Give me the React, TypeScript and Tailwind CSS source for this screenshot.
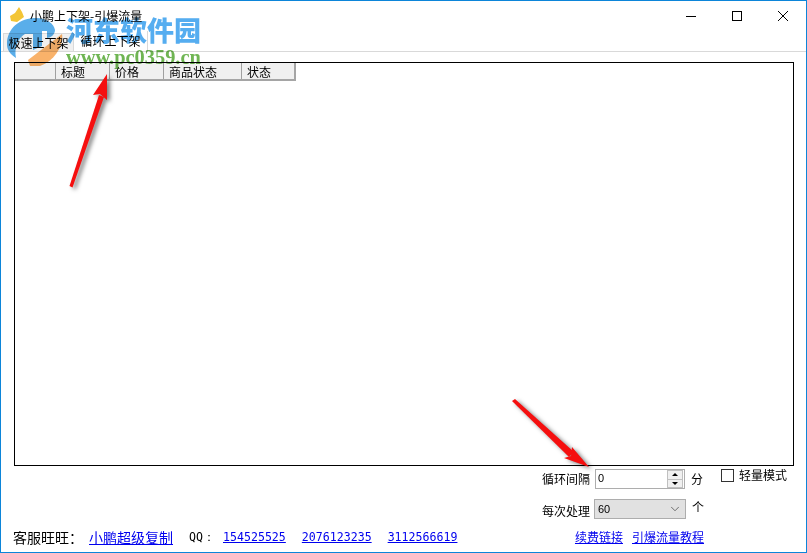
import { ChevronDown } from 'lucide-react';

const cjk = { fontFamily: '"Noto Sans CJK SC", "Liberation Sans", sans-serif' };
const mono = { fontFamily: '"DejaVu Sans Mono", "Liberation Mono", monospace' };

const columns = [
  { name: '', width: 'w-[41px]' },
  { name: '标题', width: 'w-[54px]' },
  { name: '价格', width: 'w-[54px]' },
  { name: '商品状态', width: 'w-[78px]' },
  { name: '状态', width: 'w-[52px]' },
];

function Overlay() {
  return (
    <div className="absolute -left-px -top-px w-[807px] h-[553px] pointer-events-none">
      {/* watermark */}
      <svg className="absolute left-0 top-0 mix-blend-multiply" width="807" height="553">
        <path d="M10 16 L15 13 L19 7 L22 12 L24 17 L17 22 L11 21 Z" fill="#f3c536" />
        <path d="M7 44 C7 28 20 18 36 18 C47 18 54 24 55 30 C55 35 50 38 47 38 L47 31 L42 31 L42 46 L33 50 L33 34 L25 34 C18 38 14 48 16 58 C10 54 7 50 7 44 Z" fill="#5aaeea" />
        <path d="M28 60 L62 34 C64 44 56 60 40 66 L30 66 Z" fill="#f9b26a" />
      </svg>
      <div className="absolute left-[66px] top-[11px] text-[27px] leading-[38px] font-black text-[#55adf0] mix-blend-multiply whitespace-nowrap" style={cjk}>
        河东软件园
      </div>
      <div className="absolute left-[66px] top-[46px] text-[20.4px] leading-[22px] font-bold text-[#6fb553] mix-blend-multiply whitespace-nowrap" style={{ fontFamily: '"Liberation Serif", serif' }}>
        www.pc0359.cn
      </div>
      {/* red arrows */}
      <svg className="absolute left-0 top-0 drop-shadow-[3px_2px_2px_rgba(0,0,0,0.5)]" width="807" height="553">
        <polygon points="69.5,186 72.5,187.5 104,97 99,95" fill="#f50f0f" />
        <polygon points="107,74 93,95 100,94 107,100" fill="#f50f0f" />
        <polygon points="512,401 515,399 574,452 569,457" fill="#f50f0f" />
        <polygon points="589,467 564,458 571,456 572,447" fill="#f50f0f" />
      </svg>
    </div>
  );
}

export default function App() {
  return (
    <div className="relative w-[807px] h-[553px] bg-white border border-[#0c85d9] overflow-hidden flex flex-col text-black text-xs" style={cjk}>
      {/* TITLE BAR */}
      <div className="h-[30px] shrink-0 flex items-center justify-between">
        <span className="ml-[29px] text-xs leading-4">小鹏上下架-引爆流量</span>
        <div className="flex h-[30px]">
          <div className="w-[46px] flex items-center justify-center">
            <svg width="10" height="10"><path d="M0 5.5 H10" stroke="#000" /></svg>
          </div>
          <div className="w-[46px] flex items-center justify-center">
            <svg width="10" height="10"><rect x="0.5" y="0.5" width="9" height="9" fill="none" stroke="#000" /></svg>
          </div>
          <div className="w-[46px] flex items-center justify-center">
            <svg width="10" height="10"><path d="M0 0 L10 10 M10 0 L0 10" stroke="#000" /></svg>
          </div>
        </div>
      </div>

      {/* TABS */}
      <div className="h-[21px] shrink-0 flex items-end border-b border-[#d9d9d9] pl-[2px]">
        <div className="w-[71px] h-[18px] bg-[#f0f0f0] border border-b-0 border-[#d9d9d9] flex items-center justify-center leading-4">极速上下架</div>
        <div className="w-[74px] h-[20px] bg-white border-r border-[#d9d9d9] flex items-center justify-center leading-4">循环上下架</div>
      </div>

      {/* LIST */}
      <div className="mt-[10px] ml-[13px] w-[780px] h-[404px] shrink-0 border border-black bg-white">
        <div className="flex w-fit h-[18px] bg-[#f0f0f0] border-b-2 border-r-2 border-[#a5a5a5]">
          {columns.map((col) => (
            <div key={col.name} className={`${col.width} h-[16px] border-r border-[#a0a0a0] pl-[5px] leading-[17px] last:border-r-0`}>
              {col.name}
            </div>
          ))}
        </div>
      </div>

      {/* CONTROLS */}
      <div className="flex justify-end pr-[19px] pt-[3px] shrink-0">
        <div className="flex flex-col items-start gap-[10px]">
          <div className="flex h-[20px] items-center">
            <span className="w-[48px] leading-4">循环间隔</span>
            <div className="ml-[5px] w-[90px] h-[20px] border border-[#adadad] flex justify-between items-start pl-[2px] leading-[16px]">
              <span className="text-[11px]" style={{ fontFamily: '"Liberation Sans", sans-serif' }}>0</span>
              <div className="w-[16px] h-[18px] mr-px flex flex-col bg-[#f0f0f0] border border-[#c0c0c0]">
                <div className="flex-1 flex items-center justify-center"><div className="border-x-[3px] border-b-[3px] border-x-transparent border-b-black" /></div>
                <div className="flex-1 flex items-center justify-center border-t border-[#c0c0c0]"><div className="border-x-[3px] border-t-[3px] border-x-transparent border-t-black" /></div>
              </div>
            </div>
            <span className="ml-[6px] w-[12px] leading-4">分</span>
            <div className="ml-[18px] -mt-[7px] w-[13px] h-[13px] border border-[#333] bg-white" />
            <span className="ml-[5px] -mt-[8px] leading-4">轻量模式</span>
          </div>
          <div className="flex h-[20px] items-center">
            <span className="w-[48px] leading-4 mt-[3px]">每次处理</span>
            <div className="ml-[4px] w-[92px] h-[20px] bg-[#e1e1e1] border border-[#adadad] flex items-center justify-between pl-[3px] pr-[3px]">
              <span className="text-[11px]" style={{ fontFamily: '"Liberation Sans", sans-serif' }}>60</span>
              <ChevronDown size={14} strokeWidth={1.25} className="text-[#444]" />
            </div>
            <span className="ml-[6px] w-[13px] -mt-[4px] leading-4">个</span>
            <div className="w-[82px]" />
          </div>
        </div>
      </div>

      {/* FOOTER */}
      <div className="mt-[8px] pl-[12px] pr-[102px] flex items-center justify-between shrink-0 h-[20px]">
        <div className="flex items-center text-sm leading-5">
          <span className="w-[76px]">客服旺旺：</span>
          <a className="text-[#0000ee] underline">小鹏超级复制</a>
          <span className="ml-[16px] text-[11.6px] w-[34px]" style={mono}>QQ：</span>
          {['154525525', '2076123235', '3112566619'].map((qq) => (
            <a key={qq} className="mr-[16px] text-[#0000ee] underline text-[11.6px]" style={mono}>
              {qq}
            </a>
          ))}
        </div>
        <div className="flex gap-[9px] leading-4">
          <a className="text-[#0000ee] underline">续费链接</a>
          <a className="text-[#0000ee] underline">引爆流量教程</a>
        </div>
      </div>

      <Overlay />
    </div>
  );
}
